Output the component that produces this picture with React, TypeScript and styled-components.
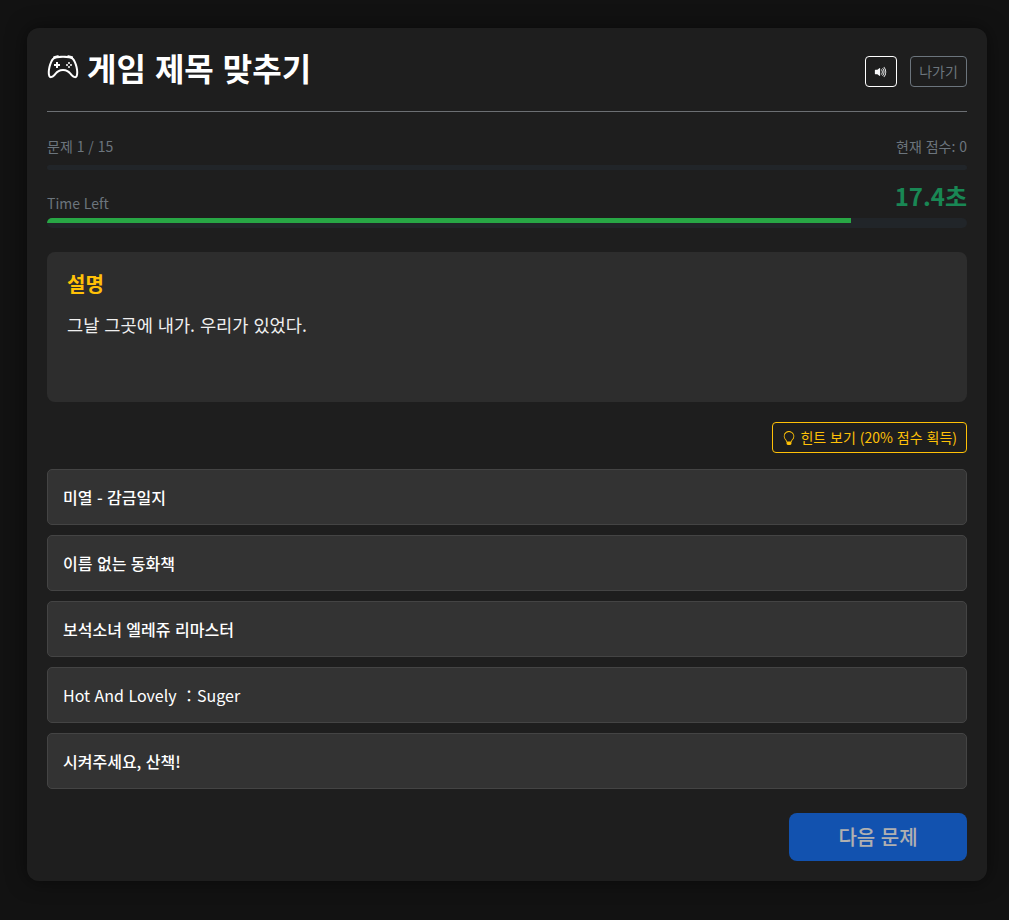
import React from "react";
import styled, { createGlobalStyle } from "styled-components";
import { BsController, BsVolumeUpFill, BsLightbulb } from "react-icons/bs";

const Global = createGlobalStyle`
  html, body { margin: 0; padding: 0; background: #121212; }
  body { font-family: "Noto Sans CJK KR", "Noto Sans KR", sans-serif; font-size: 16px; line-height: 1.5; color: #fff; }
  * { box-sizing: border-box; word-spacing: 0.055em; }
`;

const Page = styled.div`
  width: 1009px;
  height: 920px;
  padding: 28px 22px 39px 27px;
`;
const Card = styled.main`
  width: 960px;
  height: 853px;
  padding: 20px;
  background: #1e1e1e;
  border-radius: 12px;
  box-shadow: 0 0 20px rgba(0, 0, 0, 0.5);
  display: flex;
  flex-direction: column;
`;
const Header = styled.header`
  height: 63px;
  display: flex;
  justify-content: space-between;
  align-items: flex-start;
  border-bottom: 1px solid #6c6f73;
  box-sizing: content-box;
`;
const Title = styled.h1`
  margin: 0;
  font-size: 32px;
  line-height: 38px;
  font-weight: 700;
  display: flex;
  align-items: center;
  gap: 8px;
  svg { font-size: 32px; }
`;
const Actions = styled.div`
  display: flex;
  gap: 13px;
  margin-top: 8px;
`;
const SoundButton = styled.button`
  width: 32px;
  height: 31px;
  padding: 0;
  background: transparent;
  border: 1px solid #fff;
  border-radius: 4px;
  color: #f8f9fa;
  display: flex;
  align-items: center;
  justify-content: center;
  font-size: 14px;
`;
const ExitButton = styled.button`
  width: 57px;
  height: 31px;
  padding: 0;
  background: transparent;
  border: 1px solid #6c757d;
  border-radius: 4px;
  color: #6c757d;
  font: inherit;
  font-size: 14px;
`;
const InfoRow = styled.div<{ $top: number }>`
  display: flex;
  justify-content: space-between;
  align-items: flex-end;
  color: #6c757d;
  font-size: 14px;
  line-height: 21px;
  margin-top: ${(p) => p.$top}px;
`;
const Countdown = styled.span`
  font-size: 24px;
  line-height: 28px;
  margin-bottom: 4px;
  font-weight: 700;
  color: #198754;
`;
const Track = styled.div<{ $h: number; $top: number }>`
  height: ${(p) => p.$h}px;
  margin-top: ${(p) => p.$top}px;
  background: #212529;
  border-radius: 5px;
  overflow: hidden;
`;
const Fill = styled.div`
  height: 5px;
  background: #28a745;
`;
const Description = styled.section`
  margin-top: 24px;
  height: 150px;
  padding: 16px 20px;
  background: #2d2d2d;
  border-radius: 8px;
`;
const DescTitle = styled.h2`
  margin: 0 0 12px;
  font-size: 20px;
  line-height: 32px;
  font-weight: 700;
  color: #ffc107;
`;
const DescText = styled.p`
  margin: 0;
  font-size: 17.6px;
  line-height: 26px;
  color: #f0f0f0;
`;
const HintRow = styled.div`
  display: flex;
  justify-content: flex-end;
  margin-top: 20px;
`;
const HintButton = styled.button`
  height: 31px;
  padding: 0 9px;
  display: flex;
  align-items: center;
  gap: 4px;
  background: transparent;
  border: 1px solid #ffc107;
  border-radius: 4px;
  color: #ffc107;
  font: inherit;
  font-size: 14px;
  font-weight: 400;
  svg { font-size: 14px; }
`;
const Options = styled.div`
  margin-top: 16px;
  display: flex;
  flex-direction: column;
  gap: 10px;
`;
const Option = styled.button<{ $latin?: boolean }>`
  height: 56px;
  padding: 0 15px;
  background: #333;
  border: 1px solid #444;
  border-radius: 5px;
  color: #fff;
  font: inherit;
  font-size: 16px;
  font-weight: ${(p) => (p.$latin ? 400 : 500)};
  text-align: left;
`;
const Footer = styled.div`
  display: flex;
  justify-content: flex-end;
  margin-top: 24px;
`;
const NextButton = styled.button`
  width: 178px;
  height: 48px;
  background: #0d6efd;
  opacity: 0.65;
  border: none;
  border-radius: 8px;
  color: #fff;
  font: inherit;
  font-size: 20px;
  font-weight: 500;
`;

const options = ["미열 - 감금일지", "이름 없는 동화책", "보석소녀 엘레쥬 리마스터", "Hot And Lovely ：Suger", "시켜주세요, 산책!"];

export default function App() {
  return (
    <Page>
      <Global />
      <Card>
        <Header>
          <Title><BsController />게임 제목 맞추기</Title>
          <Actions>
            <SoundButton aria-label="소리"><BsVolumeUpFill /></SoundButton>
            <ExitButton>나가기</ExitButton>
          </Actions>
        </Header>
        <InfoRow $top={24}><span>문제 1 / 15</span><span>현재 점수: 0</span></InfoRow>
        <Track $h={5} $top={8} />
        <InfoRow $top={12}><span>Time Left</span><Countdown>17.4초</Countdown></InfoRow>
        <Track $h={10} $top={4}><Fill style={{ width: `${(17.4 / 20) * 100 + 0.4}%` }} /></Track>
        <Description>
          <DescTitle>설명</DescTitle>
          <DescText>그날 그곳에 내가. 우리가 있었다.</DescText>
        </Description>
        <HintRow><HintButton><BsLightbulb />힌트 보기 (20% 점수 획득)</HintButton></HintRow>
        <Options>{options.map((o) => <Option key={o} $latin={o.startsWith("Hot")}>{o}</Option>)}</Options>
        <Footer><NextButton>다음 문제</NextButton></Footer>
      </Card>
    </Page>
  );
}
